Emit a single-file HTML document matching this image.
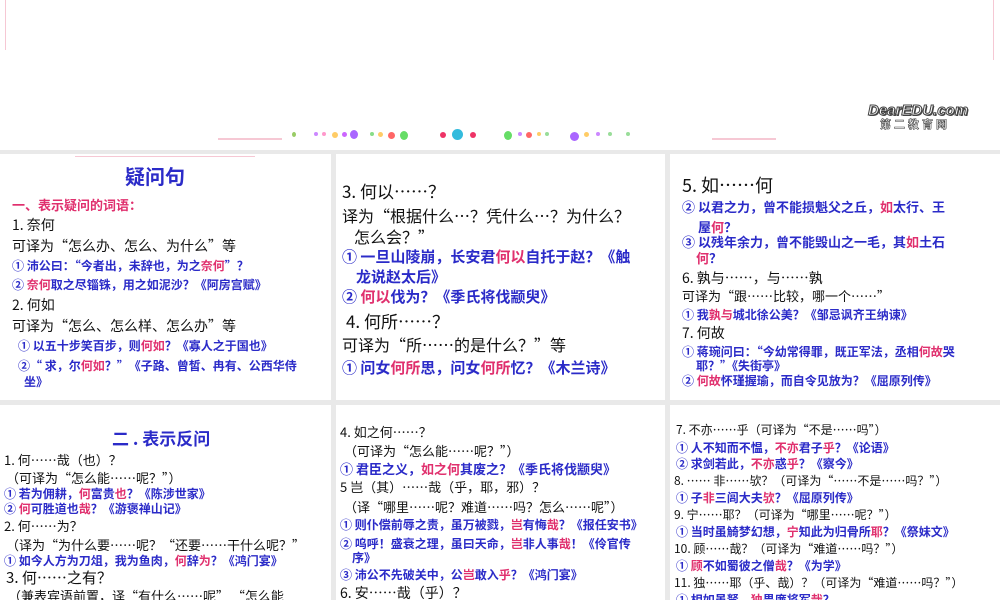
<!DOCTYPE html>
<html><head><meta charset="utf-8"><style>
*{margin:0;padding:0;box-sizing:border-box}
body{width:1000px;height:600px;overflow:hidden;background:#e9e9e9;position:relative;font-family:"Noto Sans CJK SC","Liberation Sans",sans-serif}
.top{position:absolute;left:0;top:0;width:1000px;height:150px;background:#fff}
.p{position:absolute;background:#fff;overflow:hidden}
.l{position:absolute;white-space:nowrap;line-height:1;color:#111}
.b{color:#2b2bc8;font-weight:bold}
.r{color:#e0306e}
.t{color:#2b2bc8;font-weight:bold}
.dots{position:absolute;height:8px}
.dots i{position:absolute;top:2px;width:4px;height:4px;border-radius:50%}
.pl{position:absolute;height:2px;background:#f6c8d4}
.vl{position:absolute;width:1px;background:#f6c8d4}
</style></head><body>
<div class="top">
<div class="vl" style="left:5px;top:0;height:50px"></div>
<div class="vl" style="left:993px;top:0;height:60px"></div>
<div class="pl" style="left:218px;top:138px;width:64px"></div>
<div class="pl" style="left:712px;top:138px;width:64px"></div>
<div class="dots" style="left:292px;top:130px;width:410px">
<i style="left:0;background:#9c6;width:4px;height:5px"></i><i style="left:22px;background:#c8f"></i><i style="left:30px;background:#f9c"></i><i style="left:40px;background:#fc6;width:6px;height:6px"></i><i style="left:50px;background:#c6f;width:5px;height:5px"></i><i style="left:58px;background:#a6f;width:8px;height:9px;top:0"></i><i style="left:78px;background:#8d8"></i><i style="left:86px;background:#fc6;width:5px;height:5px"></i><i style="left:96px;background:#f66;width:7px;height:7px"></i><i style="left:108px;background:#6d6;width:8px;height:9px;top:1px"></i><i style="left:148px;background:#e36;width:6px;height:6px"></i><i style="left:160px;background:#3bd;width:11px;height:11px;top:-1px"></i><i style="left:178px;background:#e36;width:6px;height:6px"></i><i style="left:212px;background:#6d6;width:8px;height:9px;top:1px"></i><i style="left:226px;background:#c8f"></i><i style="left:234px;background:#f66;width:6px;height:6px"></i><i style="left:245px;background:#fc6"></i><i style="left:253px;background:#9d9"></i><i style="left:278px;background:#a6f;width:9px;height:9px"></i><i style="left:292px;background:#fc6;width:5px;height:5px"></i><i style="left:304px;background:#c8f"></i><i style="left:316px;background:#9d9"></i><i style="left:334px;background:#9d9"></i>
</div>
<div class="l" style="left:868px;top:103px;font-family:'Liberation Sans',sans-serif;font-size:15px;font-weight:bold;font-style:italic;color:#fff;-webkit-text-stroke:1px #444;text-shadow:1px 1px 0 #444">DearEDU.com</div>
<div class="l" style="left:880px;top:119px;font-size:11px;font-weight:bold;color:#fff;-webkit-text-stroke:0.6px #444;letter-spacing:3px">第二教育网</div>
</div>

<div class="p" style="left:0;top:154px;width:331px;height:246px">
<div class="pl" style="left:75px;top:2px;width:180px;height:1px"></div>
<div class="l t" style="left:125px;top:12px;font-size:20px">疑问句</div>
<div class="l r" style="left:12px;top:44px;font-size:13px;font-weight:bold">一、表示疑问的词语：</div>
<div class="l" style="left:12px;top:64px;font-size:14px">1. 奈何</div>
<div class="l" style="left:12px;top:85px;font-size:14px">可译为“怎么办、怎么、为什么”等</div>
<div class="l b" style="left:12px;top:106px;font-size:12px">① 沛公曰：“今者出，未辞也，为之<span class="r">奈何</span>”？</div>
<div class="l b" style="left:12px;top:125px;font-size:12px">② <span class="r">奈何</span>取之尽锱铢，用之如泥沙？《阿房宫赋》</div>
<div class="l" style="left:12px;top:144px;font-size:14px">2. 何如</div>
<div class="l" style="left:12px;top:165px;font-size:14px">可译为“怎么、怎么样、怎么办”等</div>
<div class="l b" style="left:18px;top:186px;font-size:12px">① 以五十步笑百步，则<span class="r">何如</span>？《寡人之于国也》</div>
<div class="l b" style="left:18px;top:206px;font-size:12px">②“ 求，尔<span class="r">何如</span>？”　《子路、曾皙、冉有、公西华侍</div>
<div class="l b" style="left:24px;top:222px;font-size:12px">坐》</div>
</div>

<div class="p" style="left:336px;top:154px;width:329px;height:246px">
<div class="l" style="left:6px;top:28px;font-size:17px">3. 何以……？</div>
<div class="l" style="left:6px;top:53px;font-size:16px">译为“根据什么…？凭什么…？为什么？</div>
<div class="l" style="left:18px;top:74px;font-size:16px">怎么会？”</div>
<div class="l b" style="left:6px;top:95px;font-size:15px">① 一旦山陵崩，长安君<span class="r">何以</span>自托于赵？《触</div>
<div class="l b" style="left:20px;top:115px;font-size:15px">龙说赵太后》</div>
<div class="l b" style="left:6px;top:135px;font-size:15px">② <span class="r">何以</span>伐为？《季氏将伐颛臾》</div>
<div class="l" style="left:10px;top:158px;font-size:17px">4. 何所……？</div>
<div class="l" style="left:6px;top:182px;font-size:16px">可译为“所……的是什么？”等</div>
<div class="l b" style="left:6px;top:206px;font-size:15px">① 问女<span class="r">何所</span>思，问女<span class="r">何所</span>忆？《木兰诗》</div>
</div>

<div class="p" style="left:670px;top:154px;width:330px;height:246px">
<div class="l" style="left:12px;top:22px;font-size:18px">5. 如……何</div>
<div class="l b" style="left:12px;top:46px;font-size:13px">② 以君之力，曾不能损魁父之丘，<span class="r">如</span>太行、王</div>
<div class="l b" style="left:28px;top:66px;font-size:13px">屋<span class="r">何</span>？</div>
<div class="l b" style="left:12px;top:81px;font-size:13px">③ 以残年余力，曾不能毁山之一毛，其<span class="r">如</span>土石</div>
<div class="l b" style="left:26px;top:97px;font-size:13px"><span class="r">何</span>？</div>
<div class="l" style="left:12px;top:117px;font-size:14px">6. 孰与……，与……孰</div>
<div class="l" style="left:12px;top:135px;font-size:13px">可译为“跟……比较，哪一个……”</div>
<div class="l b" style="left:12px;top:155px;font-size:12px">① 我<span class="r">孰与</span>城北徐公美？《邹忌讽齐王纳谏》</div>
<div class="l" style="left:12px;top:172px;font-size:14px">7. 何故</div>
<div class="l b" style="left:12px;top:192px;font-size:12px">① 蒋琬问曰：“今幼常得罪，既正军法，丞相<span class="r">何故</span>哭</div>
<div class="l b" style="left:26px;top:206px;font-size:12px">耶？”《失街亭》</div>
<div class="l b" style="left:12px;top:221px;font-size:12px">② <span class="r">何故</span>怀瑾握瑜，而自令见放为？《屈原列传》</div>
</div>

<div class="p" style="left:0;top:405px;width:331px;height:195px">
<div class="l t" style="left:112px;top:24px;font-size:17px">二 . 表示反问</div>
<div class="l" style="left:4px;top:48px;font-size:13px">1. 何……哉（也）？</div>
<div class="l" style="left:6px;top:66px;font-size:13px">（可译为“怎么能……呢？”）</div>
<div class="l b" style="left:4px;top:83px;font-size:12px">① 若为佣耕，<span class="r">何</span>富贵<span class="r">也</span>？《陈涉世家》</div>
<div class="l b" style="left:4px;top:98px;font-size:12px">② <span class="r">何</span>可胜道也<span class="r">哉</span>？《游褒禅山记》</div>
<div class="l" style="left:4px;top:114px;font-size:13px">2. 何……为？</div>
<div class="l" style="left:6px;top:133px;font-size:13px">（译为“为什么要……呢？“还要……干什么呢？”</div>
<div class="l b" style="left:4px;top:150px;font-size:12px">① 如今人方为刀俎，我为鱼肉，<span class="r">何</span>辞<span class="r">为</span>？《鸿门宴》</div>
<div class="l" style="left:6px;top:165px;font-size:15px">3. 何……之有？</div>
<div class="l" style="left:8px;top:184px;font-size:13px">（兼表宾语前置，译“有什么……呢” “怎么能</div>
</div>

<div class="p" style="left:336px;top:405px;width:329px;height:195px">
<div class="l" style="left:4px;top:20px;font-size:13px">4. 如之何……？</div>
<div class="l" style="left:8px;top:39px;font-size:13px">（可译为“怎么能……呢？”）</div>
<div class="l b" style="left:4px;top:57px;font-size:13px">① 君臣之义，<span class="r">如之何</span>其废之？《季氏将伐颛臾》</div>
<div class="l" style="left:4px;top:75px;font-size:13px">5 岂（其）……哉（乎，耶，邪）？</div>
<div class="l" style="left:8px;top:95px;font-size:13px">（译“哪里……呢？难道……吗？怎么……呢”）</div>
<div class="l b" style="left:4px;top:114px;font-size:12px">① 则仆偿前辱之责，虽万被戮，<span class="r">岂</span>有悔<span class="r">哉</span>？《报任安书》</div>
<div class="l b" style="left:4px;top:133px;font-size:12px">② 呜呼！盛衰之理，虽曰天命，<span class="r">岂</span>非人事<span class="r">哉</span>！《伶官传</div>
<div class="l b" style="left:16px;top:147px;font-size:12px">序》</div>
<div class="l b" style="left:4px;top:164px;font-size:12px">③ 沛公不先破关中，公<span class="r">岂</span>敢入<span class="r">乎</span>？《鸿门宴》</div>
<div class="l" style="left:4px;top:181px;font-size:14px">6. 安……哉（乎）？</div>
</div>

<div class="p" style="left:670px;top:405px;width:330px;height:195px">
<div class="l" style="left:6px;top:19px;font-size:12px">7. 不亦……乎（可译为“不是……吗”）</div>
<div class="l b" style="left:6px;top:37px;font-size:12px">① 人不知而不愠，<span class="r">不亦</span>君子<span class="r">乎</span>？《论语》</div>
<div class="l b" style="left:6px;top:53px;font-size:12px">② 求剑若此，<span class="r">不亦</span>惑<span class="r">乎</span>？《察今》</div>
<div class="l" style="left:4px;top:70px;font-size:12px">8. …… 非……欤？（可译为“……不是……吗？”）</div>
<div class="l b" style="left:6px;top:87px;font-size:12px">① 子<span class="r">非</span>三闾大夫<span class="r">欤</span>？《屈原列传》</div>
<div class="l" style="left:4px;top:104px;font-size:12px">9. 宁……耶？（可译为“哪里……呢？”）</div>
<div class="l b" style="left:6px;top:121px;font-size:12px">① 当时虽觭梦幻想，<span class="r">宁</span>知此为归骨所<span class="r">耶</span>？《祭妹文》</div>
<div class="l" style="left:4px;top:138px;font-size:12px">10. 顾……哉？（可译为“难道……吗？”）</div>
<div class="l b" style="left:6px;top:155px;font-size:12px">① <span class="r">顾</span>不如蜀彼之僧<span class="r">哉</span>？《为学》</div>
<div class="l" style="left:4px;top:172px;font-size:12px">11. 独……耶（乎、哉）？（可译为“难道……吗？”）</div>
<div class="l b" style="left:6px;top:189px;font-size:12px">① 相如虽驽，<span class="r">独</span>畏廉将军<span class="r">哉</span>？</div>
</div>
</body></html>
